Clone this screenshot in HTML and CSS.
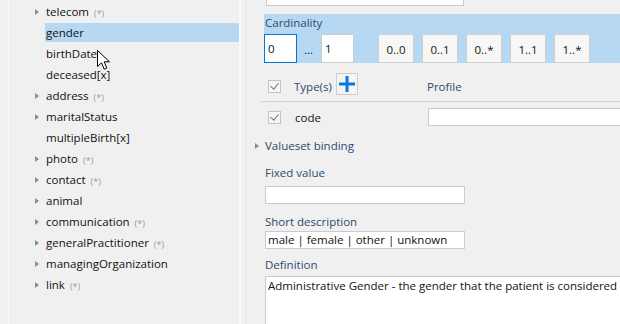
FILE: index.html
```html
<!DOCTYPE html>
<html>
<head>
    <meta charset="UTF-8">
    <title>Element editor</title>
    <link rel="stylesheet" href="styles.css">
</head>
<body>
    <div class="window">
        <div class="tree">
            <div class="node"><span class="toggle"><i class="arrow"></i></span><span class="name">telecom<small>(*)</small></span></div>
            <div class="node selected"><span class="toggle"></span><span class="name">gender</span></div>
            <div class="node"><span class="toggle"></span><span class="name">birthDate</span></div>
            <div class="node"><span class="toggle"></span><span class="name">deceased[x]</span></div>
            <div class="node"><span class="toggle"><i class="arrow"></i></span><span class="name">address<small>(*)</small></span></div>
            <div class="node"><span class="toggle"><i class="arrow"></i></span><span class="name">maritalStatus</span></div>
            <div class="node"><span class="toggle"></span><span class="name">multipleBirth[x]</span></div>
            <div class="node"><span class="toggle"><i class="arrow"></i></span><span class="name">photo<small>(*)</small></span></div>
            <div class="node"><span class="toggle"><i class="arrow"></i></span><span class="name">contact<small>(*)</small></span></div>
            <div class="node"><span class="toggle"><i class="arrow"></i></span><span class="name">animal</span></div>
            <div class="node"><span class="toggle"><i class="arrow"></i></span><span class="name">communication<small>(*)</small></span></div>
            <div class="node"><span class="toggle"><i class="arrow"></i></span><span class="name">generalPractitioner<small>(*)</small></span></div>
            <div class="node"><span class="toggle"><i class="arrow"></i></span><span class="name">managingOrganization</span></div>
            <div class="node"><span class="toggle"><i class="arrow"></i></span><span class="name">link<small>(*)</small></span></div>
        </div>

        <div class="details">
            <div class="box top-box"></div>

            <div class="cardinality">
                <div class="label">Cardinality</div>
                <div class="card-row">
                    <div class="num focused">0</div>
                    <span class="dots">...</span>
                    <div class="num">1</div>
                    <div class="presets">
                        <button class="preset">0..0</button>
                        <button class="preset">0..1</button>
                        <button class="preset">0..*</button>
                        <button class="preset">1..1</button>
                        <button class="preset">1..*</button>
                    </div>
                </div>
            </div>

            <div class="types">
                <div class="col-type">
                    <span class="check"></span>
                    <span class="label types-label">Type(s)</span>
                    <button class="add">
                        <svg width="16" height="16" viewBox="0 0 16 16"><path d="M6.5 0h3v6.5H16v3H9.5V16h-3V9.5H0v-3h6.5z" fill="#0a78d6"/></svg>
                    </button>
                </div>
                <div class="label profile-label">Profile</div>
            </div>

            <div class="type-row">
                <div class="col-type">
                    <span class="check"></span>
                    <span class="type-name">code</span>
                </div>
                <div class="box profile-box"></div>
            </div>

            <div class="expander">
                <i class="arrow"></i>
                <span class="label">Valueset binding</span>
            </div>

            <div class="label field-label fixed-label">Fixed value</div>
            <div class="box"></div>

            <div class="label field-label short-label">Short description</div>
            <div class="box">male | female | other | unknown</div>

            <div class="label field-label def-label">Definition</div>
            <div class="box definition">Administrative Gender - the gender that the patient is considered to have for administration and record keeping purposes.</div>
        </div>

        <svg class="cursor" width="14" height="21" viewBox="0 0 14 21">
            <path d="M0.5 0.5V16.5L4.5 12.8L7.2 19.2L9.8 18.1L7.2 11.8H12.5Z" fill="#fff" stroke="#000" stroke-width="1" stroke-linejoin="miter"/>
        </svg>
    </div>
</body>
</html>
```

FILE: styles.css
```css
* {
    margin: 0;
    padding: 0;
    box-sizing: border-box;
}

html, body {
    height: 100%;
    overflow: hidden;
}

body {
    font-family: 'Open Sans', 'Noto Sans', sans-serif;
    font-size: 11.5px;
    line-height: 16px;
    color: #111;
    background-color: #f0f0f0;
}

.window {
    position: relative;
    display: flex;
    height: 100%;
}

/* tree on the left */
.tree {
    width: 233px;
    margin-left: 8px;
    padding-top: 2px;
    border-left: 1px solid #f8f8f8;
    border-right: 2px solid #f8f8f8;
    flex-shrink: 0;
}

.node {
    display: flex;
    height: 19px;
    margin-bottom: 2px;
}

.toggle {
    width: 36px;
    display: flex;
    align-items: center;
    justify-content: flex-end;
    padding-right: 6px;
    flex-shrink: 0;
}

.arrow {
    display: block;
    width: 0;
    height: 0;
    border-left: 4px solid #8c8c8c;
    border-top: 3.5px solid transparent;
    border-bottom: 3.5px solid transparent;
}

.name {
    flex: 1;
    padding-left: 1px;
    padding-top: 2px;
    white-space: nowrap;
}

.name small {
    font-size: 9px;
    color: #9c9c9c;
    margin-left: 5px;
    position: relative;
    top: 1px;
}

.node.selected .name {
    background-color: #b7d8f2;
}

/* details on the right */
.details {
    flex: 1;
    margin-left: 4px;
    padding-left: 18px;
    border-left: 1px solid #e6e6e6;
    white-space: nowrap;
}

.label {
    color: #2d4a6f;
}

.box {
    width: 200px;
    height: 18px;
    margin-left: 1px;
    padding: 0 2px;
    background-color: #fff;
    border: 1px solid #cbcbcb;
    color: #111;
}

.top-box {
    width: 198px;
    margin-top: -12px;
    margin-left: 2px;
}

.cardinality {
    margin-top: 8px;
    height: 49px;
    padding: 1px 0 0 1px;
    background-color: #b7d8f2;
}

.card-row {
    display: flex;
    align-items: flex-start;
    margin-top: 3px;
    margin-left: -1px;
}

.num {
    width: 33px;
    height: 29px;
    padding: 6px 0 0 3px;
    background-color: #fff;
    border: 1px solid #cbcbcb;
}

.num.focused {
    border-color: #0078d7;
}

.dots {
    width: 24px;
    padding: 8px 0 0 7px;
    color: #222;
}

.presets {
    display: flex;
    gap: 8px;
    margin-left: 24px;
}

.preset {
    width: 36px;
    height: 29px;
    font: inherit;
    color: #111;
    background-color: #f7f7f5;
    border: 1px solid #cfcfcf;
    padding-top: 2px;
}

.types {
    display: flex;
    height: 39px;
    padding-top: 10px;
    margin-left: -3px;
    padding-left: 3px;
    border-bottom: 1px solid #d3d3d3;
}

.col-type {
    width: 163px;
    display: flex;
    align-items: flex-start;
    flex-shrink: 0;
}

.check {
    width: 13px;
    height: 13px;
    margin-left: 4px;
    margin-top: 7px;
    border: 1px solid #c4c4c4;
    background-color: #f6f6f6;
    position: relative;
}

.check::after {
    content: "";
    position: absolute;
    left: 3px;
    top: 0px;
    width: 4px;
    height: 7px;
    border-right: 1.5px solid #767676;
    border-bottom: 1.5px solid #767676;
    transform: rotate(40deg);
}

.types-label {
    margin-left: 13px;
    margin-top: 6px;
}

.add {
    width: 22px;
    height: 22px;
    margin-left: 4px;
    display: flex;
    align-items: center;
    justify-content: center;
    background-color: #f4f4f4;
    border: 1px solid #cdcdcd;
}

.profile-label {
    margin-top: 6px;
}

.type-row {
    display: flex;
    margin-top: 6px;
}

.type-row .check {
    margin-top: 3px;
}

.type-name {
    margin-left: 14px;
    margin-top: 2px;
}

.profile-box {
    width: 260px;
    margin-left: 1px;
}

.expander {
    display: flex;
    align-items: center;
    margin-top: 12px;
    margin-left: -9px;
}

.expander .arrow {
    margin-right: 6px;
}

.fixed-label {
    margin-top: 11px;
    margin-bottom: 5px;
}

.short-label {
    margin-top: 10px;
    margin-bottom: 1px;
}

.def-label {
    margin-top: 8px;
    margin-bottom: 3px;
}

.field-label {
    padding-left: 1px;
}

.definition {
    width: 420px;
    height: 80px;
    padding-top: 1px;
}

.cursor {
    position: absolute;
    left: 97px;
    top: 50px;
}
```
